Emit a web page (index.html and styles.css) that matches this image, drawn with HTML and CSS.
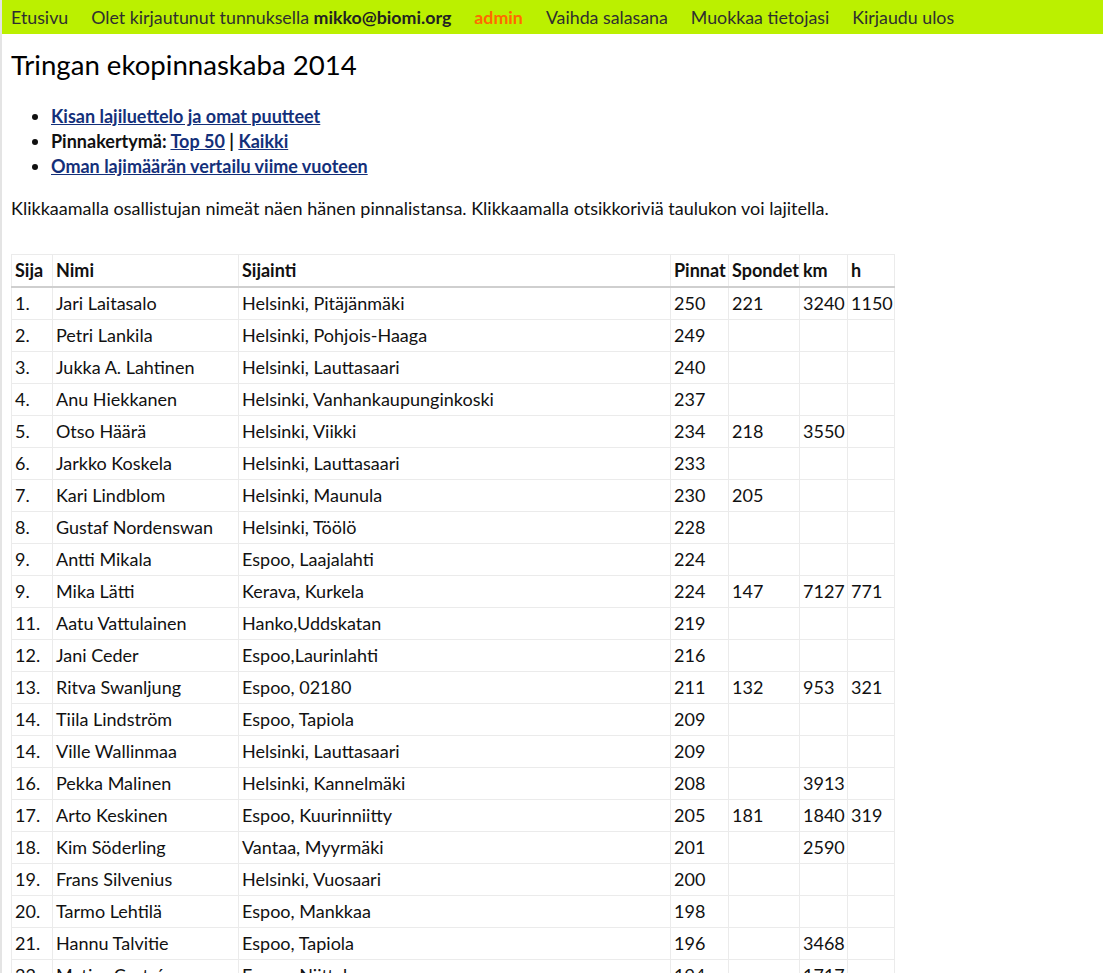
FILE: index.html
```html
<!DOCTYPE html>
<html lang="fi">
<head>
<meta charset="utf-8">
<title>Tringan ekopinnaskaba 2014</title>
<link rel="stylesheet" href="styles.css">
</head>
<body>
<nav class="topbar">
  <a class="nav-item" href="#">Etusivu</a>
  <span class="nav-item">Olet kirjautunut tunnuksella <b>mikko@biomi.org</b></span>
  <a class="nav-item admin" href="#">admin</a>
  <a class="nav-item" href="#">Vaihda salasana</a>
  <a class="nav-item" href="#">Muokkaa tietojasi</a>
  <a class="nav-item" href="#">Kirjaudu ulos</a>
</nav>
<main class="content">
  <h1 class="title">Tringan ekopinnaskaba 2014</h1>
  <ul class="links">
    <li><a href="#">Kisan lajiluettelo ja omat puutteet</a></li>
    <li>Pinnakertymä: <a href="#">Top 50</a> | <a href="#">Kaikki</a></li>
    <li><a href="#">Oman lajimäärän vertailu viime vuoteen</a></li>
  </ul>
  <p class="intro">Klikkaamalla osallistujan nimeät näen hänen pinnalistansa. Klikkaamalla otsikkoriviä taulukon voi lajitella.</p>
  <table class="results">
    <colgroup>
      <col class="c-sija"><col class="c-nimi"><col class="c-paikka"><col class="c-pinnat"><col class="c-spondet"><col class="c-km"><col class="c-h">
    </colgroup>
    <thead>
      <tr><th>Sija</th><th>Nimi</th><th>Sijainti</th><th>Pinnat</th><th>Spondet</th><th>km</th><th>h</th></tr>
    </thead>
    <tbody>
      <tr><td>1.</td><td>Jari Laitasalo</td><td>Helsinki, Pitäjänmäki</td><td>250</td><td>221</td><td>3240</td><td>1150</td></tr>
      <tr><td>2.</td><td>Petri Lankila</td><td>Helsinki, Pohjois-Haaga</td><td>249</td><td></td><td></td><td></td></tr>
      <tr><td>3.</td><td>Jukka A. Lahtinen</td><td>Helsinki, Lauttasaari</td><td>240</td><td></td><td></td><td></td></tr>
      <tr><td>4.</td><td>Anu Hiekkanen</td><td>Helsinki, Vanhankaupunginkoski</td><td>237</td><td></td><td></td><td></td></tr>
      <tr><td>5.</td><td>Otso Häärä</td><td>Helsinki, Viikki</td><td>234</td><td>218</td><td>3550</td><td></td></tr>
      <tr><td>6.</td><td>Jarkko Koskela</td><td>Helsinki, Lauttasaari</td><td>233</td><td></td><td></td><td></td></tr>
      <tr><td>7.</td><td>Kari Lindblom</td><td>Helsinki, Maunula</td><td>230</td><td>205</td><td></td><td></td></tr>
      <tr><td>8.</td><td>Gustaf Nordenswan</td><td>Helsinki, Töölö</td><td>228</td><td></td><td></td><td></td></tr>
      <tr><td>9.</td><td>Antti Mikala</td><td>Espoo, Laajalahti</td><td>224</td><td></td><td></td><td></td></tr>
      <tr><td>9.</td><td>Mika Lätti</td><td>Kerava, Kurkela</td><td>224</td><td>147</td><td>7127</td><td>771</td></tr>
      <tr><td>11.</td><td>Aatu Vattulainen</td><td>Hanko,Uddskatan</td><td>219</td><td></td><td></td><td></td></tr>
      <tr><td>12.</td><td>Jani Ceder</td><td>Espoo,Laurinlahti</td><td>216</td><td></td><td></td><td></td></tr>
      <tr><td>13.</td><td>Ritva Swanljung</td><td>Espoo, 02180</td><td>211</td><td>132</td><td>953</td><td>321</td></tr>
      <tr><td>14.</td><td>Tiila Lindström</td><td>Espoo, Tapiola</td><td>209</td><td></td><td></td><td></td></tr>
      <tr><td>14.</td><td>Ville Wallinmaa</td><td>Helsinki, Lauttasaari</td><td>209</td><td></td><td></td><td></td></tr>
      <tr><td>16.</td><td>Pekka Malinen</td><td>Helsinki, Kannelmäki</td><td>208</td><td></td><td>3913</td><td></td></tr>
      <tr><td>17.</td><td>Arto Keskinen</td><td>Espoo, Kuurinniitty</td><td>205</td><td>181</td><td>1840</td><td>319</td></tr>
      <tr><td>18.</td><td>Kim Söderling</td><td>Vantaa, Myyrmäki</td><td>201</td><td></td><td>2590</td><td></td></tr>
      <tr><td>19.</td><td>Frans Silvenius</td><td>Helsinki, Vuosaari</td><td>200</td><td></td><td></td><td></td></tr>
      <tr><td>20.</td><td>Tarmo Lehtilä</td><td>Espoo, Mankkaa</td><td>198</td><td></td><td></td><td></td></tr>
      <tr><td>21.</td><td>Hannu Talvitie</td><td>Espoo, Tapiola</td><td>196</td><td></td><td>3468</td><td></td></tr>
      <tr><td>22.</td><td>Matias Castrén</td><td>Espoo, Niittykumpu</td><td>194</td><td></td><td>1717</td><td></td></tr>
    </tbody>
  </table>
</main>
</body>
</html>
```

FILE: styles.css
```css
html, body {
  margin: 0;
  padding: 0;
  background: #fff;
}
body {
  font-family: Lato, "Noto Sans", sans-serif;
  font-size: 18px;
  color: #111;
}
.topbar {
  display: flex;
  align-items: center;
  gap: 23px;
  height: 34px;
  padding: 0 9px;
  background: #bbf000;
  border-left: 2px solid #e4e4e4;
}
.nav-item {
  color: #2f2f2f;
  text-decoration: none;
  font-size: 17.8px;
}
.nav-item b {
  color: #222;
}
.nav-item.admin {
  color: #ff6a00;
  font-weight: bold;
}
.content {
  border-left: 2px solid #e4e4e4;
  padding: 0 9px;
}
.title {
  margin: 0;
  padding-top: 14px;
  font-size: 27.6px;
  font-weight: normal;
  line-height: 34px;
  color: #000;
}
.links {
  margin: 22px 0 0;
  padding-left: 40px;
  line-height: 25px;
  font-weight: bold;
}
.links a {
  color: #14307a;
  text-decoration: underline;
}
.intro {
  margin: 17px 0 0;
  line-height: 24px;
}
.results {
  margin-top: 34px;
  border-collapse: collapse;
  table-layout: fixed;
  width: 883px;
}
.c-sija { width: 41px; }
.c-nimi { width: 186px; }
.c-paikka { width: 432px; }
.c-pinnat { width: 58px; }
.c-spondet { width: 71px; }
.c-km { width: 48px; }
.c-h { width: 47px; }
.results th, .results td {
  border: 1px solid #ebebeb;
  padding: 4px 3px;
  line-height: 23px;
  text-align: left;
  white-space: nowrap;
  overflow: hidden;
}
.results th {
  font-weight: bold;
  border-bottom: 2px solid #cfcfcf;
}
```
